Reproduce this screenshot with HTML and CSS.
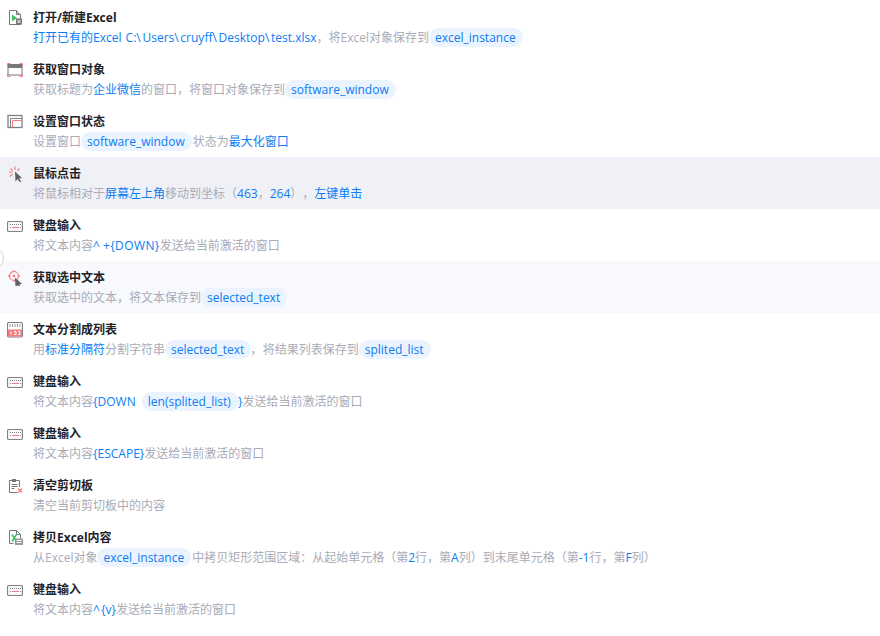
FILE: index.html
```html
<!DOCTYPE html>
<html lang="zh">
<head>
<meta charset="utf-8">
<title>流程</title>
<link rel="stylesheet" href="styles.css">
</head>
<body>
<svg class="defs" width="0" height="0" aria-hidden="true">
  <symbol id="kbd" viewBox="0 0 16 16">
    <rect x="0.5" y="3.5" width="15" height="10" rx="1.5" fill="#fafafb" stroke="#808085" stroke-width="1.2"/>
    <path d="M3 6.500h1M5 6.500h1M7 6.500h1M9 6.500h1M11 6.500h1M13 6.500h1M3 9.500h1M13 9.500h1" stroke="#808085"/>
    <path d="M5 9.500h7" stroke="#f47c7c"/>
  </symbol>
  <symbol id="cursor" viewBox="0 0 16 16">
    <path d="M8 5.500l7 6.500-3 .5 2.300 3-1.700.5-2.100-3L8.500 15.500z" fill="#5f5f64"/>
  </symbol>
</svg>
<main class="list">
  <div class="row">
    <svg class="icon" viewBox="0 0 16 16"><path d="M2.500 .5h7l4 4v10h-11z" fill="#fff" stroke="#77777c"/><path d="M9.500 .5v4h4" fill="#bbb" stroke="#77777c"/><path d="M5 4.500v7l5-3.500z" fill="#3fbf5f"/><rect x="9" y="8.500" width="6" height="6" fill="#77777c"/><path d="M10.500 10l3 3M13.500 10l-3 3" stroke="#fff"/></svg>
    <div class="body">
      <div class="title">打开/新建Excel</div>
      <div class="desc"><b>打开已有的Excel <i class="gap"></i>C:<i class="bs">\</i>Users<i class="bs">\</i>cruyff<i class="bs">\</i>Desktop<i class="bs">\</i>test.xlsx</b>，将Excel对象保存到<span class="tag">excel_instance</span></div>
    </div>
  </div>
  <div class="row">
    <svg class="icon" viewBox="0 0 16 16"><rect x="1" y="2.500" width="14" height="10.500" fill="#fff" stroke="#77777c"/><rect x="1" y="3" width="14" height="3" fill="#77777c"/><path d="M.5 4V1.500h3M12.500 1.500h3V4M.5 12v2.500h3M12.500 14.500h3V12" fill="none" stroke="#f47c7c"/></svg>
    <div class="body">
      <div class="title">获取窗口对象</div>
      <div class="desc">获取标题为<b>企业微信</b>的窗口，将窗口对象保存到<span class="tag">software_window</span></div>
    </div>
  </div>
  <div class="row">
    <svg class="icon" viewBox="0 0 16 16"><rect x="1" y="1.500" width="14" height="12" fill="#fff" stroke="#808085" stroke-width="1.300"/><path d="M3.500 13V4.500H15" fill="none" stroke="#808085"/><path d="M5.500 13V6.500H15" fill="none" stroke="#f47c7c"/></svg>
    <div class="body">
      <div class="title">设置窗口状态</div>
      <div class="desc">设置窗口<span class="tag">software_window</span>状态为<b>最大化窗口</b></div>
    </div>
  </div>
  <div class="row hover">
    <svg class="icon" viewBox="0 0 16 16"><path d="M8 .5v3.500M3.500 2.500l2 2M2 6h3.500M3 10.500l2.500-2.500M12.500 2.500l-2 2" stroke="#f47c7c" stroke-width="1.100"/><use href="#cursor"/></svg>
    <div class="body">
      <div class="title">鼠标点击</div>
      <div class="desc">将鼠标相对于<b>屏幕左上角</b>移动到坐标（<b>463</b>，<b>264</b>），<b>左键单击</b></div>
    </div>
  </div>
  <div class="row">
    <svg class="icon"><use href="#kbd"/></svg>
    <div class="body">
      <div class="title">键盘输入</div>
      <div class="desc">将文本内容<b class="wide"><i class="caret">^</i><i class="plus">+</i>{DOWN}</b>发送给当前激活的窗口</div>
    </div>
  </div>
  <div class="row soft">
    <svg class="icon" viewBox="0 0 16 16"><circle cx="7" cy="6" r="4.500" fill="none" stroke="#f47c7c" stroke-width="1.200"/><circle cx="7" cy="6" r="1.300" fill="#f47c7c"/><path d="M7 0v2.500M7 9.500V12M1 6h2.500M10.500 6H13" stroke="#f47c7c"/><use href="#cursor" class="cursor-low"/></svg>
    <div class="body">
      <div class="title">获取选中文本</div>
      <div class="desc">获取选中的文本，将文本保存到<span class="tag">selected_text</span></div>
    </div>
  </div>
  <div class="row">
    <svg class="icon" viewBox="0 0 16 16"><rect x="0.500" y="0.500" width="15" height="14.500" rx="1.500" fill="#fff" stroke="#808085" stroke-width="1.200"/><path d="M3 2v3M5.500 2v3M8 2v3M10.500 2v3M13 2v3" stroke="#9a9a9f"/><rect x="1" y="7.500" width="14" height="7" fill="#f47c7c"/><path d="M4 9.500v3M7 9.500h2v3H7M11 9.500h2v3h-2" fill="none" stroke="#fff"/></svg>
    <div class="body">
      <div class="title">文本分割成列表</div>
      <div class="desc">用<b>标准分隔符</b>分割字符串<span class="tag">selected_text</span><span class="pull">，</span>将结果列表保存到<span class="tag">splited_list</span></div>
    </div>
  </div>
  <div class="row">
    <svg class="icon"><use href="#kbd"/></svg>
    <div class="body">
      <div class="title">键盘输入</div>
      <div class="desc">将文本内容<b>{DOWN </b><span class="tag inset">len(splited_list) </span><b>}</b>发送给当前激活的窗口</div>
    </div>
  </div>
  <div class="row">
    <svg class="icon"><use href="#kbd"/></svg>
    <div class="body">
      <div class="title">键盘输入</div>
      <div class="desc">将文本内容<b>{ESCAPE}</b>发送给当前激活的窗口</div>
    </div>
  </div>
  <div class="row">
    <svg class="icon" viewBox="0 0 16 16"><path d="M5 2.500H2.500v12h8M12.500 9V2.500H9" fill="none" stroke="#77777c"/><rect x="5" y="1" width="4" height="3" fill="#77777c"/><path d="M4.500 6.500h6M4.500 8.500h6M4.500 10.500h3" stroke="#77777c"/><path d="M11 10.500l4 4M15 10.500l-4 4" stroke="#f47c7c" stroke-width="1.200"/></svg>
    <div class="body">
      <div class="title">清空剪切板</div>
      <div class="desc">清空当前剪切板中的内容</div>
    </div>
  </div>
  <div class="row">
    <svg class="icon" viewBox="0 0 16 16"><path d="M2.500 .5h7l4 4v4M2.500 .5v13h4" fill="#fff" stroke="#77777c"/><path d="M9.500 .5v4h4" fill="none" stroke="#77777c"/><path d="M5 4.500l4.500 7M9.500 4.500l-4.500 7" stroke="#3fbf5f" stroke-width="1.500"/><rect x="8" y="8.500" width="8" height="6.500" fill="#99999e"/><path d="M9.500 10.500h5M9.500 12.500h5" stroke="#fff"/></svg>
    <div class="body">
      <div class="title">拷贝Excel内容</div>
      <div class="desc">从Excel对象<span class="tag">excel_instance</span>中拷贝矩形范围区域：从起始单元格（第<b>2</b>行，第<b>A</b>列）到末尾单元格（第<b>-1</b>行，第<b>F</b>列）</div>
    </div>
  </div>
  <div class="row">
    <svg class="icon"><use href="#kbd"/></svg>
    <div class="body">
      <div class="title">键盘输入</div>
      <div class="desc">将文本内容<b><i class="caret">^</i>{v}</b>发送给当前激活的窗口</div>
    </div>
  </div>
</main>
<div class="handle"></div>
</body>
</html>
```

FILE: styles.css
```css
* { box-sizing: border-box; }
html, body { margin: 0; height: 100%; overflow: hidden; background: #fff; }
body {
  font-family: "Open Sans", "Noto Sans CJK SC", "Noto Sans", sans-serif;
  font-size: 12px;
  position: relative;
  text-spacing-trim: space-all;
}
.defs { position: absolute; }
.list { display: flex; flex-direction: column; padding-top: 1px; }
.row {
  height: 52px;
  display: flex;
  align-items: flex-start;
  padding: 8px 0 0 7px;
  gap: 10px;
}
.row.hover { background: #f0f1f6; }
.row.soft { background: #f7f9fc; }
.icon { width: 16px; height: 16px; flex: none; margin-top: 1px; }
.cursor-low { transform: translateY(2px); }
.body { display: flex; flex-direction: column; min-width: 0; }
.title {
  height: 18px;
  line-height: 18px;
  font-weight: 700;
  color: #1f2329;
  white-space: nowrap;
}
.desc {
  height: 22px;
  line-height: 22px;
  color: #a9abb7;
  white-space: nowrap;
}
.desc b { font-weight: 400; color: #0a7cf5; white-space: pre; }
.desc i { font-style: normal; }
.bs { letter-spacing: 1.7px; }
.gap { margin-left: 1px; }
.caret { letter-spacing: 1px; }
.plus { margin-left: 2px; }
.wide { letter-spacing: .4px; }
.pull { margin-left: -2px; margin-right: .5px; }
.tag {
  display: inline-block;
  height: 19px;
  line-height: 19px;
  padding: 0 7px 0 6px;
  margin: 0 1px 0 0;
  border-radius: 10px;
  background: #eaf3fe;
  color: #0a7cf5;
  vertical-align: baseline;
  white-space: pre;
}
.tag.inset { margin: 0 -1px 0 3px; padding-right: 5px; }
.handle {
  position: absolute;
  left: -8px;
  top: 250px;
  width: 12px;
  height: 17px;
  border: 1px solid #d6d6da;
  border-radius: 50%;
  background: #fff;
}
```
